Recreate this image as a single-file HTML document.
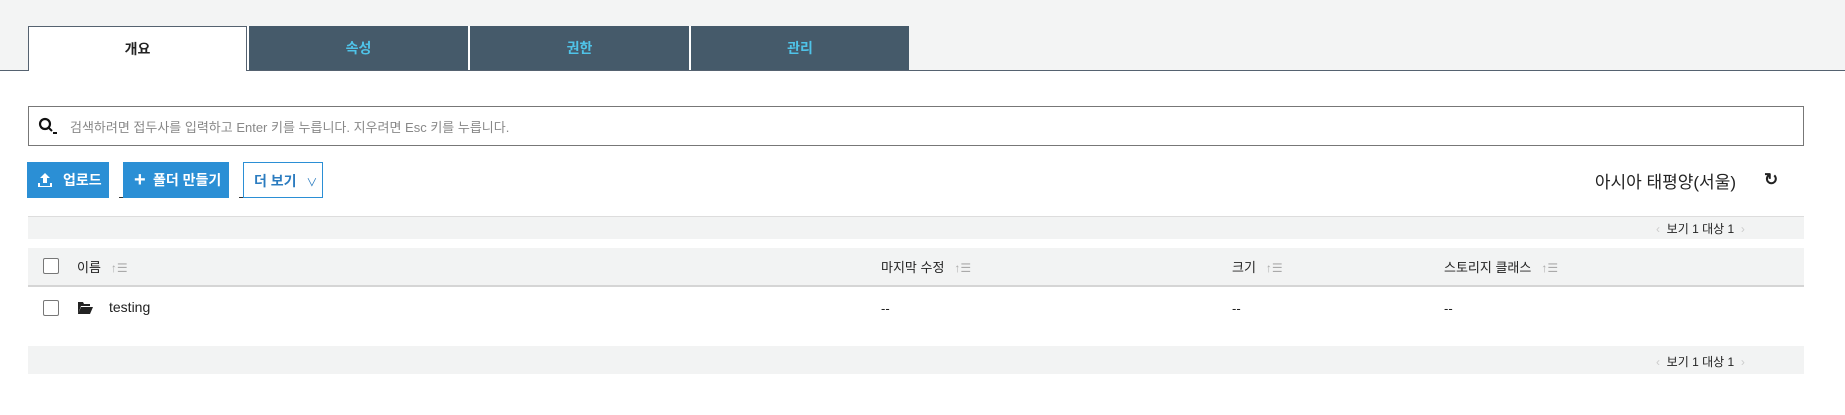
<!DOCTYPE html>
<html><head><meta charset="utf-8"><style>
body{margin:0;width:1845px;height:415px;background:#fff;font-family:"Liberation Sans","Noto Sans CJK KR",sans-serif;position:relative;overflow:hidden;color:#16191f}
.a{position:absolute}
.top{left:0;top:0;width:1845px;height:70px;background:#f3f4f4;border-bottom:1px solid #556270}
.tab{top:26px;height:44px;line-height:44px;text-align:center;font-size:14px;font-weight:bold;box-sizing:border-box}
.dark{background:#455a6a;color:#4fc3e8;border-left:2px solid #fff}
.btn{top:162px;height:36px;line-height:36px;font-size:14px;font-weight:bold;box-sizing:border-box;color:#fff;background:#2b8fd5}
.bar{left:28px;width:1776px;background:#f2f3f3}
.cb{width:14px;height:14px;border:1px solid #777;border-radius:2px;background:#fff}
.h{font-size:13px;color:#222}
.s{color:#aaa;font-size:12px;margin-left:10px}
</style></head><body>
<div class="a top"></div>
<div class="a tab" style="left:28px;width:219px;background:#fff;border:1px solid #556270;border-bottom:none;height:45px;color:#222">개요</div>
<div class="a tab dark" style="left:247px;width:221px">속성</div>
<div class="a tab dark" style="left:468px;width:221px">권한</div>
<div class="a tab dark" style="left:689px;width:220px">관리</div>

<div class="a" style="left:28px;top:106px;width:1776px;height:40px;border:1px solid #777;box-sizing:border-box"></div>
<svg class="a" style="left:38px;top:117px" width="22" height="18"><circle cx="7" cy="7" r="5" fill="none" stroke="#111" stroke-width="2.2"/><path d="M10.5 10.5L14 14M15 16h4" stroke="#111" stroke-width="2"/></svg>
<div class="a" style="left:70px;top:117px;font-size:13px;color:#888">검색하려면 접두사를 입력하고 Enter 키를 누릅니다. 지우려면 Esc 키를 누릅니다.</div>

<div class="a btn" style="left:27px;width:82px;padding-left:36px">업로드</div>
<svg class="a" style="left:37px;top:172px" width="16" height="16"><path d="M8 1L3 6h3v5h4V6h3z M1 11h2v3h10v-3h2v4H1z" fill="#fff"/></svg>
<div class="a" style="left:119px;top:197px;width:4px;height:1px;background:#333"></div>
<div class="a btn" style="left:123px;width:106px;padding-left:30px">폴더 만들기</div>
<div class="a" style="left:134px;top:172px;color:#fff;font-size:20px;font-weight:bold;line-height:16px">+</div>
<div class="a" style="left:239px;top:197px;width:4px;height:1px;background:#333"></div>
<div class="a btn" style="left:243px;width:80px;background:#fff;border:1px solid #2b8fd5;color:#2b7cc0;padding-left:10px">더 보기 <span style="font-weight:normal;font-size:11px;margin-left:6px">&#8744;</span></div>

<div class="a" style="right:109px;top:168px;font-size:17px;color:#222">아시아 태평양(서울)</div>
<div class="a" style="left:1764px;top:170px;font-size:17px;font-weight:bold;color:#222">&#8635;</div>

<div class="a bar" style="top:216px;height:22px;border-top:1px solid #ddd"></div>
<div class="a" style="left:1656px;top:220px;font-size:12px;color:#222"><span style="color:#ccc">&#8249;</span>&nbsp; 보기 1 대상 1 &nbsp;<span style="color:#ccc">&#8250;</span></div>

<div class="a bar" style="top:248px;height:39px;border-bottom:2px solid #d5d5d5;box-sizing:border-box"></div>
<div class="a cb" style="left:43px;top:258px"></div>
<div class="a h" style="left:77px;top:257px">이름<span class="s">↑☰</span></div>
<div class="a h" style="left:881px;top:257px">마지막 수정<span class="s">↑☰</span></div>
<div class="a h" style="left:1232px;top:257px">크기<span class="s">↑☰</span></div>
<div class="a h" style="left:1444px;top:257px">스토리지 클래스<span class="s">↑☰</span></div>

<div class="a cb" style="left:43px;top:300px"></div>
<svg class="a" style="left:77px;top:301px" width="16" height="14"><path d="M1 1h5l1 2h6v2H4L1 13z M4 6h12l-3 7H1z" fill="#222"/></svg>
<div class="a" style="left:109px;top:299px;font-size:14px;color:#222">testing</div>
<div class="a h" style="left:881px;top:301px">--</div>
<div class="a h" style="left:1232px;top:301px">--</div>
<div class="a h" style="left:1444px;top:301px">--</div>

<div class="a bar" style="top:346px;height:28px"></div>
<div class="a" style="left:1656px;top:353px;font-size:12px;color:#222"><span style="color:#ccc">&#8249;</span>&nbsp; 보기 1 대상 1 &nbsp;<span style="color:#ccc">&#8250;</span></div>
</body></html>
